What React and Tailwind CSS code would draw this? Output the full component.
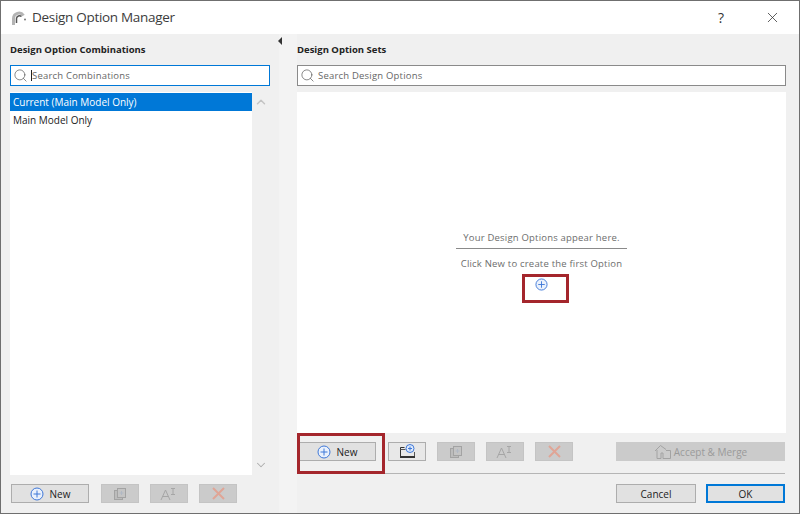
import { Search, ChevronUp, ChevronDown, X } from "lucide-react";

const PlusCircle = ({ size = 14 }) => (
    <svg width={size} height={size} viewBox="0 0 14 14" fill="none" stroke="#3f78d8" strokeWidth="1">
        <circle cx="7" cy="7" r="6" fill="#eaf1fc" />
        <path d="M7 3.5v7M3.5 7h7" />
    </svg>
);

const CopyIcon = () => (
    <svg width="14" height="14" viewBox="0 0 14 14" fill="none" stroke="#a3a3a3" strokeWidth="1">
        <rect x="1.5" y="3.5" width="8" height="9" fill="#bcbcbc" />
        <rect x="4.5" y="1.5" width="8" height="9" fill="#c4c4c4" />
        <path d="M8.5 4v4M6.5 6h4" stroke="#b0b8c4" />
    </svg>
);

const RenameIcon = () => (
    <svg width="18" height="14" viewBox="0 0 18 14" fill="none" stroke="#a6a6a6" strokeWidth="1">
        <path d="M1 13 5.5 3 10 13M2.8 9.5h5.4" />
        <path d="M11 1.5h4M13 1.5v6M11 7.5h4" />
    </svg>
);

const DeleteIcon = () => (
    <svg width="13" height="13" viewBox="0 0 13 13" fill="none" stroke="#e0a596" strokeWidth="2">
        <path d="M1 1l11 11M12 1 1 12" />
    </svg>
);

const NewSetIcon = () => (
    <svg width="17" height="17" viewBox="0 0 17 17" fill="none">
        <path d="M1.5 14V4.5h4" stroke="#333" />
        <path d="M1.5 6.5h5M15.5 9v5" stroke="#555" />
        <path d="M1 14h15" stroke="#333" strokeWidth="2" />
        <circle cx="11" cy="5.5" r="4" fill="#dfeafb" stroke="#3f78d8" />
        <path d="M11 3.5v4M9 5.5h4" stroke="#3f78d8" />
    </svg>
);

const HouseIcon = () => (
    <svg width="18" height="16" viewBox="0 0 18 16" fill="none" stroke="#a3a3a3">
        <path d="M1 7 6.5 1.5 12 5.5" />
        <path d="M3 6v8.5h4V9h2v5.5h7.5V6.5H12" />
    </svg>
);

const NewButton = () => (
    <button className="w-[78px] h-[19px] mr-[1px] pt-[1px] flex items-center justify-center gap-[6px] bg-[#e1e1e1] border border-[#adadad] text-[10px] text-[#222]">
        <PlusCircle />
        New
    </button>
);

const IconButton = ({ disabled = true, children }) => (
    <button className={`w-[38px] h-[19px] flex items-center justify-center border ${disabled ? "bg-[#cbcbcb] border-[#c4c4c4]" : "bg-[#e8e8e8] border-[#adadad]"}`}>
        {children}
    </button>
);

const SearchBox = ({ placeholder, active }) => (
    <div className={`h-[21px] flex items-center gap-[3px] px-[2px] bg-white border ${active ? "border-[#0078d7]" : "border-[#8a8a8a]"}`}>
        <Search size={15} strokeWidth={1.1} color="#555" />
        {active && <span className="w-px h-[11px] bg-[#222] -mr-[3px]" />}
        <span className="pt-[1px] text-[9.5px] text-[#666] tracking-[0.2px]">{placeholder}</span>
    </div>
);

const App = () => {
    return (
        <div className="relative w-[800px] h-[514px] flex flex-col bg-[#f0f0f0] border border-[#6f6f6f] font-['Open_Sans',sans-serif] overflow-hidden">
            {/* Title bar */}
            <div className="h-[33px] shrink-0 flex items-center bg-white pl-[11px]">
                <svg width="15" height="14" viewBox="0 0 15 14" fill="none" className="mr-[5px]">
                    <path d="M1.5 14V7.5A5.5 5.5 0 0 1 11.5 4.5" stroke="#b4b4b4" strokeWidth="3" />
                    <path d="M4.5 12V7.5a3 3 0 0 1 5-2" stroke="#555" strokeWidth="1.5" />
                    <circle cx="13" cy="8.5" r="1" fill="#777" />
                </svg>
                <span className="text-[13.5px] text-[#3c3c3c] tracking-[-0.3px]">Design Option Manager</span>
                <span className="ml-auto text-[14px] text-[#333] mr-[40px]">?</span>
                <X size={17} strokeWidth={1.1} color="#333" className="mr-[18px]" />
            </div>

            <div className="flex-1 flex min-h-0">
                {/* Left column */}
                <div className="w-[278px] shrink-0 flex flex-col pl-[9px] pr-[9px] pt-[9px] pb-[10px]">
                    <h2 className="h-[14px] mb-[8px] text-[9.5px] leading-[14px] font-bold text-[#222]">Design Option Combinations</h2>
                    <SearchBox placeholder="Search Combinations" active />
                    <div className="flex-1 flex mt-[6px] min-h-0">
                        <div className="w-[242px] bg-white pt-[1px]">
                            <div className="h-[18px] flex items-center px-[3px] bg-[#0078d7] text-[10px] text-white">Current (Main Model Only)</div>
                            <div className="h-[19px] flex items-center px-[3px] text-[10px] text-[#222]">Main Model Only</div>
                        </div>
                        <div className="flex-1 flex flex-col justify-between items-center py-[3px]">
                            <ChevronUp size={14} color="#c4c4c4" strokeWidth={2.5} />
                            <ChevronDown size={14} color="#adadad" strokeWidth={1.75} />
                        </div>
                    </div>
                    <div className="flex items-center gap-[11px] mt-[9px] pl-[1px]">
                        <NewButton />
                        <IconButton><CopyIcon /></IconButton>
                        <IconButton><RenameIcon /></IconButton>
                        <IconButton><DeleteIcon /></IconButton>
                    </div>
                </div>

                {/* Splitter */}
                <div className="w-[18px] shrink-0 pt-[3px] bg-[#f3f3f3]">
                    <span className="block w-0 h-0 -ml-[1px] border-y-[4px] border-y-transparent border-r-[4px] border-r-[#333]" />
                </div>

                {/* Right column */}
                <div className="flex-1 flex flex-col pr-[13px] pt-[9px] pb-[10px]">
                    <h2 className="h-[14px] mb-[8px] text-[9.5px] leading-[14px] font-bold text-[#222]">Design Option Sets</h2>
                    <SearchBox placeholder="Search Design Options" />
                    <div className="flex-1 flex flex-col items-center justify-center mt-[6px] bg-white pb-[2px]">
                        <p className="w-[171px] pb-[3px] border-b border-[#8a8a8a] text-center text-[9.5px] leading-[14px] text-[#6d6d6d] tracking-[0.2px]">Your Design Options appear here.</p>
                        <p className="mt-[8px] text-[9.5px] leading-[14px] text-[#6d6d6d] tracking-[0.2px]">Click New to create the first Option</p>
                        <div className="mt-[7px] h-[14px]"><PlusCircle size={13} /></div>
                    </div>
                    <div className="flex items-center gap-[11px] mt-[9px] pl-[1px] pr-[1px]">
                        <NewButton />
                        <IconButton disabled={false}><NewSetIcon /></IconButton>
                        <IconButton><CopyIcon /></IconButton>
                        <IconButton><RenameIcon /></IconButton>
                        <IconButton><DeleteIcon /></IconButton>
                        <button className="ml-[32px] flex-1 h-[19px] pt-[1px] flex items-center justify-center gap-[2px] bg-[#cbcbcb] text-[10px] text-[#9a9a9a]">
                            <HouseIcon />
                            Accept &amp; Merge
                        </button>
                    </div>
                    <div className="mt-[12px] mr-[1px] h-px bg-[#b5b5b5]" />
                    <div className="flex justify-end gap-[10px] mt-[10px] pr-[1px]">
                        <button className="w-[80px] h-[19px] pt-[1px] bg-[#e1e1e1] border border-[#adadad] text-[10px] text-[#222]">Cancel</button>
                        <button className="w-[79px] h-[19px] pt-[1px] bg-[#e1e1e1] border-2 border-[#0078d7] text-[10px] text-[#222]">OK</button>
                    </div>
                </div>
            </div>

            {/* Red callouts */}
            <div className="absolute left-[521px] top-[273px] w-[47px] h-[29px] border-[3px] border-[#a4262c]" />
            <div className="absolute left-[296px] top-[432px] w-[88px] h-[41px] border-[3px] border-[#a4262c]" />
        </div>
    );
};

export default App;
